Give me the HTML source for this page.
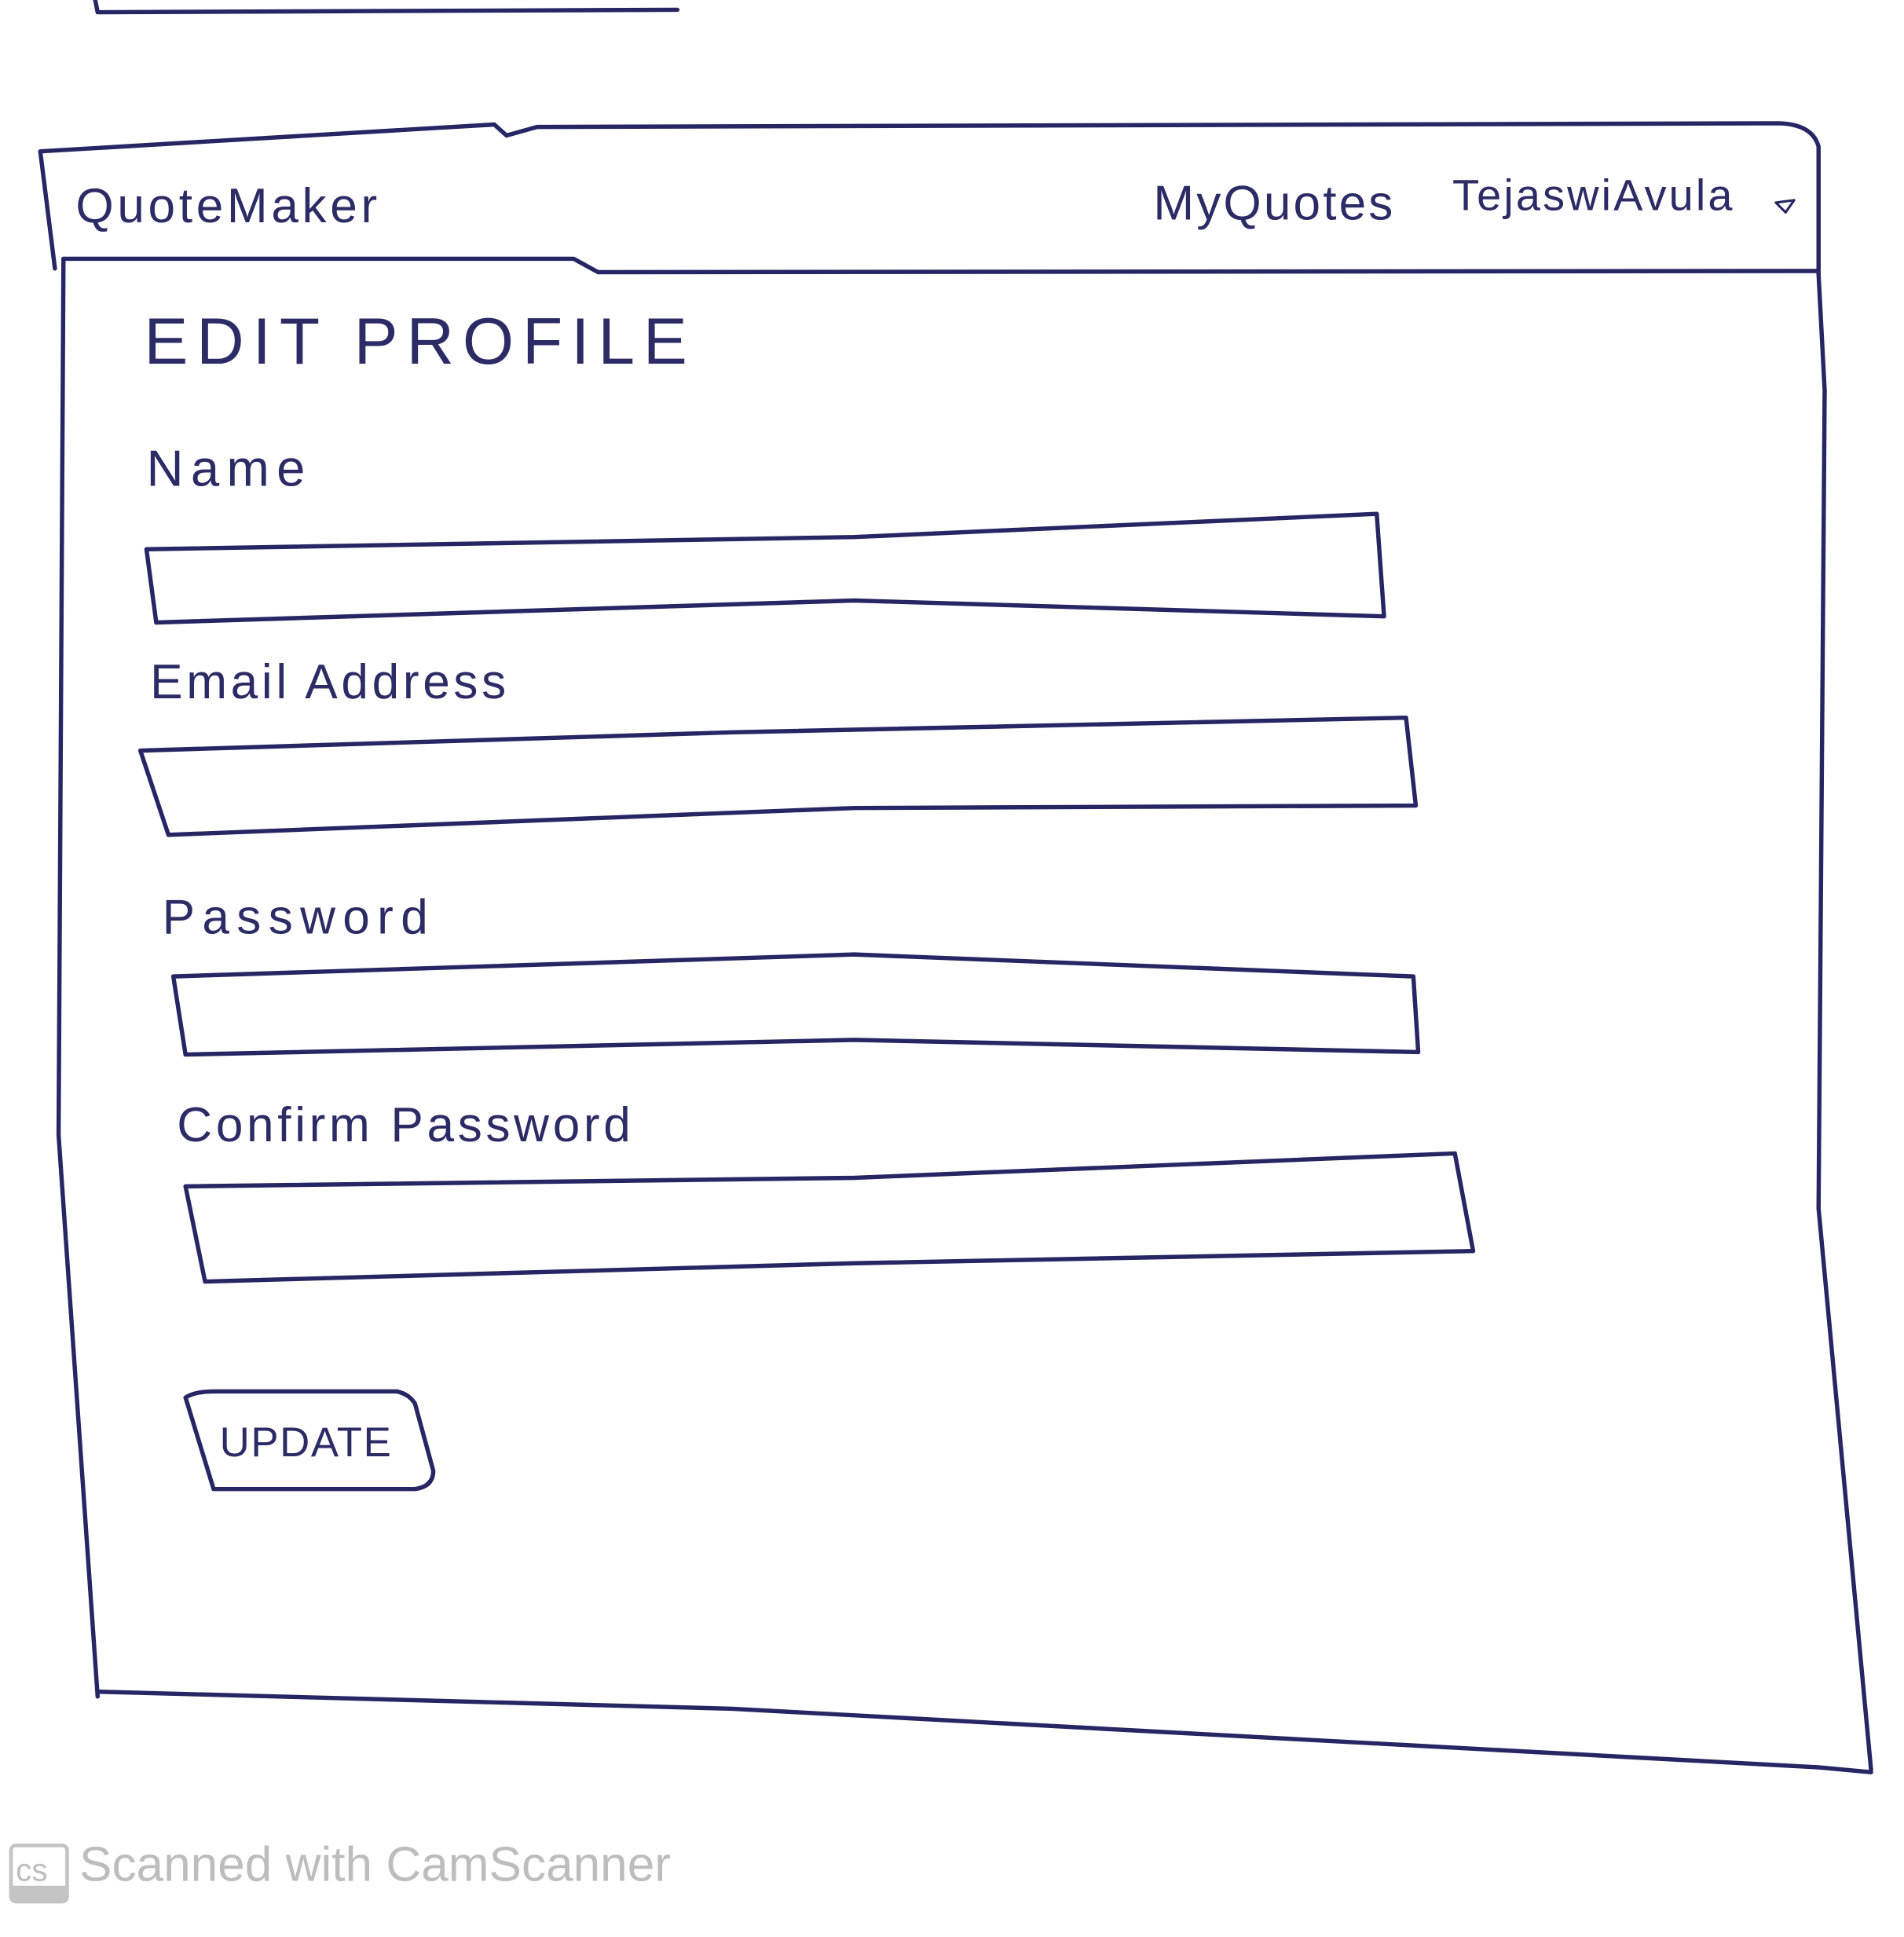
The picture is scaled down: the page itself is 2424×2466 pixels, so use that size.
<!DOCTYPE html>
<html><head><meta charset="utf-8"><style>
html,body{margin:0;padding:0;background:#fff;width:2424px;height:2466px;overflow:hidden}
svg{display:block}
text{font-family:"Liberation Sans",sans-serif;fill:#2b2b66}
</style></head><body>
<svg width="2424" height="2466" viewBox="0 0 1560 1587" xmlns="http://www.w3.org/2000/svg">
<g fill="none" stroke="#262664" stroke-width="3.5" stroke-linejoin="round" stroke-linecap="round">
<path d="M78 0 L80 10 L555 8"/>
<path d="M45 220 L33 124 L405 102 L415 111 L440 104 L1458 101 Q1485 102 1490 120 L1490 225"/>
<path d="M52 212 L470 212 L490 223 L1490 222"/>
<path d="M52 212 L48 930 L80 1390"/>
<path d="M80 1386 L600 1400 L1490 1448 L1533 1452"/>
<path d="M1490 225 L1495 320 L1490 990 L1533 1450"/>
<path d="M120 450 L700 440 L1128 421 L1134 505 L700 492 L128 510 Z"/>
<path d="M115 615 L600 600 L1152 588 L1160 660 L700 662 L138 684 Z"/>
<path d="M142 800 L700 782 L1158 800 L1162 862 L700 852 L152 864 Z"/>
<path d="M152 972 L700 965 L1192 945 L1207 1025 L700 1035 L168 1050 Z"/>
<path d="M152 1145 Q160 1140 175 1140 L325 1140 Q335 1142 340 1150 L355 1205 Q355 1218 340 1220 L175 1220 Z"/>
<path d="M1455 166 L1470 164 L1463 174 Z" stroke-width="2"/>
</g>
<text x="62" y="182" font-size="40" letter-spacing="3">QuoteMaker</text>
<text x="945" y="180" font-size="40" letter-spacing="2">MyQuotes</text>
<text x="1190" y="172" font-size="36" letter-spacing="2">TejaswiAvula</text>
<text x="118" y="298" font-size="54" letter-spacing="7">EDIT PROFILE</text>
<text x="120" y="398" font-size="42" letter-spacing="6">Name</text>
<text x="123" y="572" font-size="40" letter-spacing="3">Email Address</text>
<text x="133" y="765" font-size="40" letter-spacing="6">Password</text>
<text x="145" y="935" font-size="40" letter-spacing="3">Confirm Password</text>
<text x="180" y="1193" font-size="34" letter-spacing="1">UPDATE</text>
<rect x="9" y="1512" width="46" height="46" rx="4" fill="none" stroke="#c4c4c4" stroke-width="3"/>
<rect x="9" y="1545" width="46" height="13" fill="#c4c4c4"/>
<text x="13" y="1541" font-size="26" style="fill:#bdbdbd">cs</text>
<text x="65" y="1541" font-size="40" style="fill:#bdbdbd">Scanned with CamScanner</text>
</svg>
</body></html>
